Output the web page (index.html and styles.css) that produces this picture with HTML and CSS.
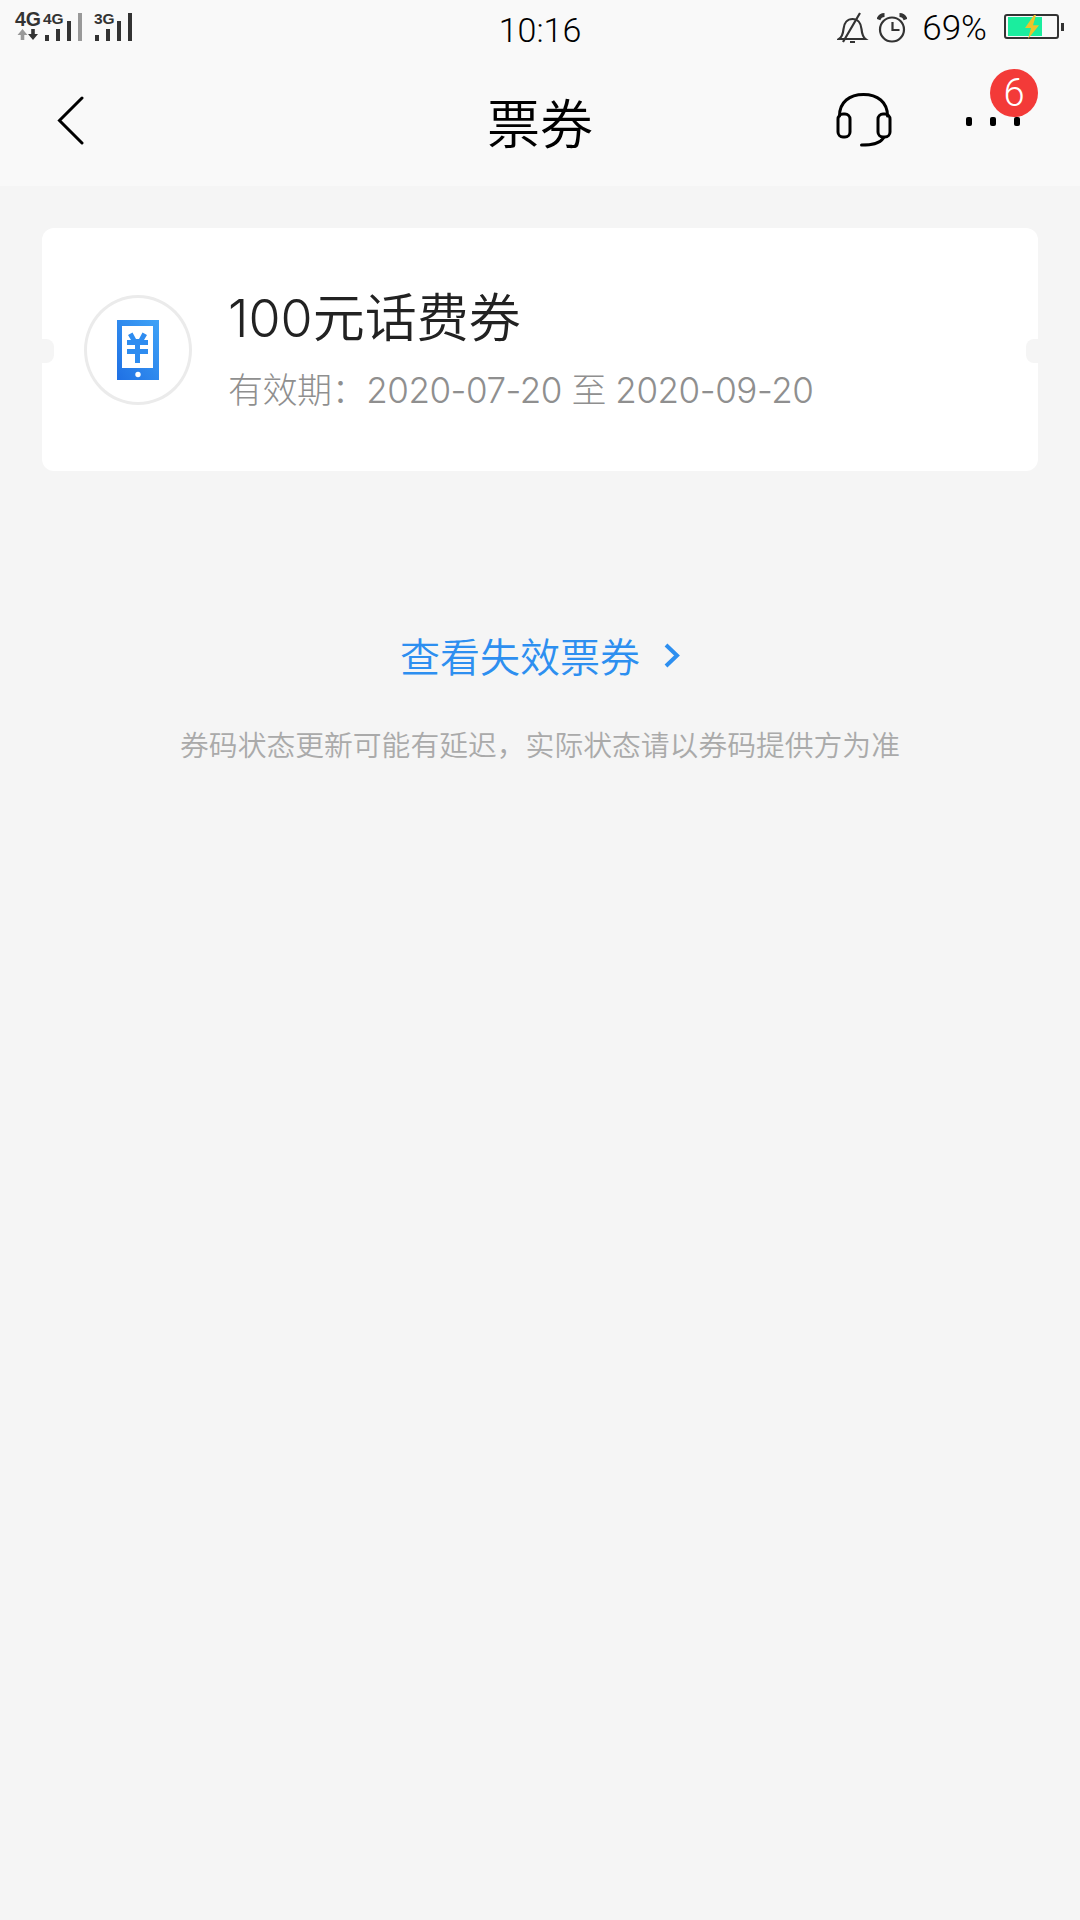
FILE: index.html
```html
<!DOCTYPE html>
<html lang="zh-CN">
<head>
    <meta charset="UTF-8">
    <meta name="viewport" content="width=device-width, initial-scale=1.0">
    <title>票券</title>
    <link rel="stylesheet" href="styles.css">
</head>
<body>
    <div class="top">
        <div class="status">
            <div class="status-left">
                <svg width="140" height="56" viewBox="0 0 140 56">
                    <text x="15" y="26" class="net net-big">4G</text>
                    <path d="M22.500 29l-5 6h3.200v5h3.600v-5h3.200z" class="arrow-up"/>
                    <path d="M33 40l-5-6h3.200v-5h3.600v5h3.200z" class="arrow-down"/>
                    <text x="43" y="24" class="net">4G</text>
                    <rect x="45" y="35" width="4" height="6" class="bar"/>
                    <rect x="56" y="29" width="4" height="12" class="bar"/>
                    <rect x="67" y="21" width="4" height="20" class="bar"/>
                    <rect x="78" y="13" width="4" height="28" class="bar bar-off"/>
                    <text x="94" y="24" class="net">3G</text>
                    <rect x="95" y="35" width="4" height="6" class="bar"/>
                    <rect x="106" y="29" width="4" height="12" class="bar"/>
                    <rect x="117" y="21" width="4" height="20" class="bar"/>
                    <rect x="128" y="13" width="4" height="28" class="bar"/>
                </svg>
            </div>
            <div class="clock">10:16</div>
            <div class="status-right">
                <svg width="32" height="32" viewBox="0 0 32 32" class="ico-bell">
                    <path d="M2 27c3-2 4-5 4.500-10 .5-6 4-10 9-10 5 0 8.500 4 9 10 .5 5 1.500 8 4 10z"/>
                    <path d="M6 30L23 1M13 30h5"/>
                </svg>
                <svg width="30" height="30" viewBox="0 0 30 30" class="ico-alarm">
                    <circle cx="15" cy="16.500" r="12"/>
                    <path d="M15.500 9v8h7"/>
                    <path d="M1.500 6.500c1-3 3-4.500 6-4.500M28.500 6.500c-1-3-3-4.500-6-4.500" class="alarm-ears"/>
                </svg>
                <span class="percent">69%</span>
                <div class="battery">
                    <div class="battery-fill"></div>
                    <svg class="bolt" width="16" height="24" viewBox="0 0 16 26" preserveAspectRatio="none">
                        <path d="M10 0L1 14h6L4 26l11-15H9l3-11z"/>
                    </svg>
                </div>
                <div class="battery-tip"></div>
            </div>
        </div>
        <div class="nav">
            <svg class="back" width="28" height="50" viewBox="0 0 28 50">
                <path d="M25 2L2.500 24.500 25 47"/>
            </svg>
            <div class="nav-title">票券</div>
            <svg class="headset" width="56" height="56" viewBox="0 0 56 56">
                <path d="M3.500 24C3.500 10 13.500 2.500 27.500 2.500S51.500 10 51.500 24"/>
                <rect x="2" y="22" width="12" height="23" rx="5"/>
                <rect x="42" y="22" width="12" height="23" rx="5"/>
                <path d="M47.500 46c-4 6-12 7-22 7"/>
            </svg>
            <div class="more">
                <span class="dot"></span><span class="dot"></span><span class="dot"></span>
                <span class="badge">6</span>
            </div>
        </div>
    </div>

    <div class="content">
        <div class="card">
            <div class="card-icon">
                <svg width="42" height="60" viewBox="0 0 42 60">
                    <defs>
                        <linearGradient id="phone" x1="1" y1="0" x2="0" y2="1">
                            <stop offset="0" stop-color="#3fa3f7"/>
                            <stop offset="1" stop-color="#1f70e4"/>
                        </linearGradient>
                    </defs>
                    <path fill="url(#phone)" fill-rule="evenodd" d="M0 0h42v60H0zM5 6v42h31V6z"/>
                    <circle cx="21" cy="54.500" r="2.700" fill="#fff"/>
                    <path fill="#2e8cf0" d="M11 15l4.500-2.500L19 19h3l3.500-6.500L30 15l-3 5h4v5h-8v4h8v5h-8v9h-5v-9h-8v-5h8v-4h-8v-5h4z"/>
                </svg>
            </div>
            <div class="card-info">
                <div class="card-title">100元话费券</div>
                <div class="card-date">有效期：2020-07-20 至 2020-09-20</div>
            </div>
            <span class="notch notch-left"></span>
            <span class="notch notch-right"></span>
        </div>

        <div class="expired">
            <span>查看失效票券</span>
            <svg width="16" height="25" viewBox="0 0 16 25">
                <path d="M2 2l11 10.500L2 23"/>
            </svg>
        </div>
        <div class="tip">券码状态更新可能有延迟，实际状态请以券码提供方为准</div>
    </div>
</body>
</html>
```

FILE: styles.css
```css
html, body {
    margin: 0;
    padding: 0;
}
body {
    width: 1080px;
    height: 1920px;
    overflow: hidden;
    background: #f5f5f5;
    font-family: "Noto Sans CJK SC", "Noto Sans", sans-serif;
}
.top {
    height: 186px;
    background: #f9f9f9;
}
.status {
    height: 56px;
    display: flex;
    align-items: center;
    justify-content: space-between;
}
.status-left {
    display: flex;
    width: 300px;
}
.net {
    font-family: "Liberation Sans", sans-serif;
    font-size: 15.500px;
    font-weight: 700;
    fill: #333;
}
.net-big {
    font-size: 19.500px;
}
.arrow-up {
    fill: #999;
}
.arrow-down {
    fill: #333;
}
.bar {
    fill: #333;
}
.bar-off {
    fill: #999;
}
.clock {
    font-family: Roboto, sans-serif;
    font-weight: 300;
    font-size: 34px;
    color: #000;
    padding-top: 4px;
}
.status-right {
    width: 300px;
    display: flex;
    align-items: center;
    justify-content: flex-end;
    padding-right: 16px;
    box-sizing: border-box;
}
.ico-bell, .ico-alarm {
    fill: none;
    stroke: #333;
    stroke-width: 2.200px;
}
.ico-bell {
    margin-right: 8px;
}
.ico-alarm {
    margin-right: 15px;
}
.alarm-ears {
    stroke-width: 4px;
}
.percent {
    font-family: Roboto, sans-serif;
    font-weight: 300;
    font-size: 35px;
    color: #000;
    margin-right: 17px;
}
.battery {
    width: 47px;
    height: 19px;
    border: 2px solid #333;
    border-radius: 3px;
    padding: 1px 2px;
    margin-bottom: 3px;
    position: relative;
}
.battery-fill {
    width: 34px;
    height: 19px;
    background: #1bed9e;
}
.bolt {
    position: absolute;
    left: 18px;
    top: -1px;
    fill: #eec32a;
}
.battery-tip {
    width: 3px;
    height: 8px;
    margin-left: 2px;
    margin-bottom: 2px;
    background: #333;
}
.nav {
    height: 130px;
    position: relative;
    display: flex;
    align-items: center;
}
.back {
    position: absolute;
    left: 57px;
    top: 40px;
    fill: none;
    stroke: #000;
    stroke-width: 3px;
    stroke-linecap: round;
}
.nav-title {
    width: 100%;
    text-align: center;
    font-size: 53px;
    font-weight: 350;
    color: #000;
}
.headset {
    position: absolute;
    left: 836px;
    top: 36px;
    fill: none;
    stroke: #000;
    stroke-width: 3px;
    stroke-linecap: round;
}
.more {
    position: absolute;
    left: 966px;
    top: 61px;
    display: flex;
    gap: 18px;
}
.dot {
    width: 6px;
    height: 9px;
    border-radius: 2px;
    background: #000;
}
.badge {
    position: absolute;
    left: 24px;
    top: -48px;
    width: 48px;
    height: 48px;
    border-radius: 50%;
    background: #f33a38;
    color: #fff;
    font-family: Roboto, sans-serif;
    font-weight: 300;
    font-size: 38px;
    line-height: 48px;
    text-align: center;
}
.content {
    padding: 42px 42px 0;
}
.card {
    height: 243px;
    background: #fff;
    border-radius: 12px;
    display: flex;
    align-items: center;
    padding-left: 42px;
    position: relative;
}
.card-icon {
    width: 102px;
    height: 104px;
    border: 3px solid #ebebeb;
    border-radius: 50%;
    display: flex;
    align-items: center;
    justify-content: center;
    margin-right: 36px;
    flex: none;
}
.card-title {
    font-family: Inter, "Noto Sans CJK SC", sans-serif;
    font-size: 52px;
    font-weight: 350;
    color: #222;
    line-height: 70px;
}
.card-date {
    font-family: Inter, "Noto Sans CJK SC", sans-serif;
    font-size: 35px;
    font-weight: 300;
    letter-spacing: -0.450px;
    color: #8f8f8f;
    line-height: 50px;
    margin-top: 11px;
}
.notch {
    position: absolute;
    top: 111px;
    width: 12px;
    height: 24px;
    background: #f5f5f5;
}
.notch-left {
    left: 0;
    border-radius: 0 8px 8px 0;
}
.notch-right {
    right: 0;
    border-radius: 8px 0 0 8px;
}
.expired {
    margin-top: 156px;
    display: flex;
    justify-content: center;
    align-items: center;
    gap: 24px;
    color: #2d8ff0;
    font-size: 40px;
    font-weight: 350;
    line-height: 56px;
}
.expired svg {
    fill: none;
    stroke: #2d8ff0;
    stroke-width: 4px;
}
.tip {
    margin-top: 41px;
    text-align: center;
    font-size: 28.800px;
    font-weight: 350;
    color: #aaa;
    line-height: 40px;
}
```
